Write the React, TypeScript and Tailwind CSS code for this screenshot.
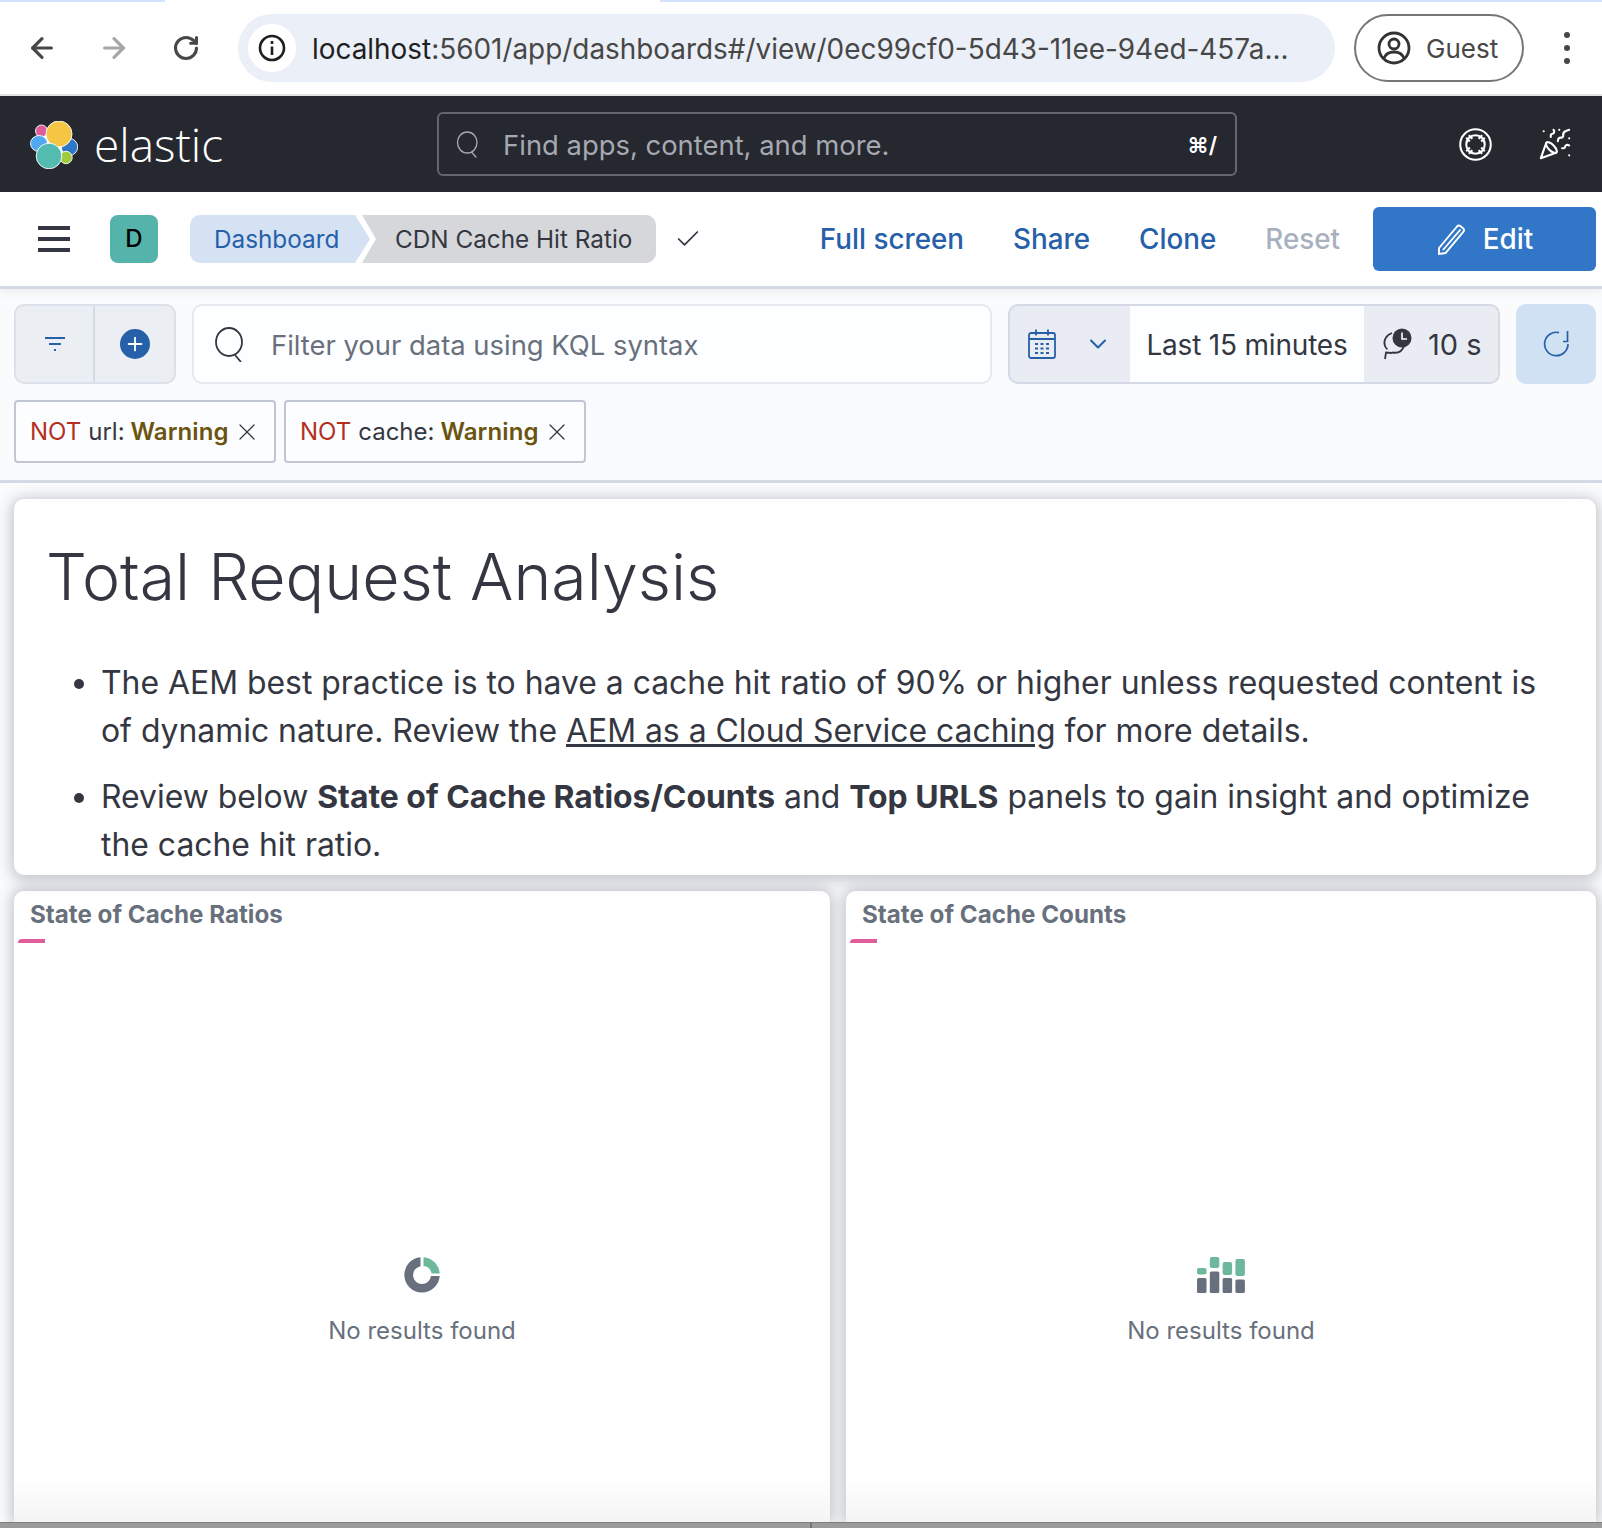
import React from 'react';
import { ArrowLeft, ArrowRight, RotateCw, ChevronDown, X, Check, PartyPopper, Plus } from 'lucide-react';

function SearchGlyph({ className }: { className?: string }) {
  return (
    <svg viewBox="0 0 32 36" fill="none" stroke="currentColor" strokeWidth="1.8" className={className}>
      <ellipse cx="15" cy="16" rx="13" ry="14" />
      <path d="M21 29l6 7" />
    </svg>
  );
}

function ElasticLogo() {
  return (
    <svg viewBox="30 20 48 48" className="h-[48px] w-[48px]" stroke="#fff" strokeWidth="0.9">
      <circle cx="54" cy="44" r="14" fill="#fff" />
      <circle cx="41.5" cy="30" r="6" fill="#E05C9C" />
      <ellipse cx="39" cy="42.5" rx="8.5" ry="8" fill="#4FA8F0" />
      <ellipse cx="69.5" cy="46" rx="8.2" ry="8.5" fill="#2E78C7" />
      <circle cx="66" cy="56.5" r="6.2" fill="#A0CB3C" />
      <circle cx="59" cy="33" r="13" fill="#F4C644" />
      <circle cx="49" cy="55" r="12.8" fill="#54BBB1" />
    </svg>
  );
}

function HelpGlyph() {
  return (
    <svg viewBox="0 0 32 32" className="h-[33px] w-[33px] text-white" fill="none" stroke="currentColor" strokeWidth="2">
      <circle cx="16" cy="16" r="14.8" />
      <circle cx="16" cy="16" r="9" />
      <path d="M7 9.500l3.500 3.500M9.500 7l3.500 3.500M25 9.500l-3.500 3.500M22.500 7l-3.500 3.500M7 22.500l3.500-3.500M9.500 25l3.500-3.500M25 22.500l-3.500-3.500M22.500 25l-3.500-3.500" />
    </svg>
  );
}

function CalendarGlyph() {
  return (
    <svg viewBox="0 0 28 30" className="h-[30px] w-[28px] text-[#2560A8]" fill="none" stroke="currentColor" strokeWidth="1.8">
      <rect x="1" y="4" width="26" height="25" rx="2" />
      <path d="M1 10h26M8 0.5v6M20 0.5v6" />
      <path d="M7 15h3M12.5 15h3M18 15h3M7 19.5h3M12.5 19.5h3M18 19.5h3M7 24h3M12.5 24h3M18 24h3" strokeWidth="2.2" />
    </svg>
  );
}

function AutoRefreshGlyph() {
  return (
    <svg viewBox="0 0 30 32" className="h-[32px] w-[30px] text-[#343741]" fill="none" stroke="currentColor" strokeWidth="1.8">
      <path d="M10 5C4 7 1 13 3 18c.6 1.6 1.5 2.6 2.5 3.4M22 18c-1.5 5-6 7.5-12 6.5" />
      <path d="M3 31l1-6.5 6 .5" />
      <circle cx="20" cy="10" r="9.500" fill="currentColor" stroke="none" />
      <path d="M20 4.500V11h5" stroke="#fff" strokeWidth="1.6" />
    </svg>
  );
}

function DonutGlyph() {
  return (
    <svg viewBox="0 0 36 36" className="h-[36px] w-[36px]">
      <path d="M16.5 0.2A17.7 17.7 0 1 0 35.7 19H27A9 9 0 1 1 16.5 9.2Z" fill="#69707D" />
      <path d="M19.5 0.2A17.7 17.7 0 0 1 35.7 16.4H27.5A9 9 0 0 0 19.5 9Z" fill="#6DB79C" />
    </svg>
  );
}

function BarsGlyph() {
  return (
    <svg viewBox="0 0 48 36" className="h-[36px] w-[48px]">
      <rect x="0" y="11" width="9.5" height="6.5" rx="2" fill="#6DB79C" />
      <rect x="0" y="21" width="9.5" height="15" rx="1.5" fill="#69707D" />
      <rect x="12.8" y="0" width="9.5" height="11" rx="2" fill="#6DB79C" />
      <rect x="12.8" y="14.5" width="9.5" height="21.5" rx="1.5" fill="#69707D" />
      <rect x="25.6" y="5" width="9.5" height="13" rx="2" fill="#6DB79C" />
      <rect x="25.6" y="21" width="9.5" height="15" rx="1.5" fill="#69707D" />
      <rect x="38.4" y="2" width="9.5" height="17" rx="2" fill="#6DB79C" />
      <rect x="38.4" y="22.5" width="9.5" height="13.5" rx="1.5" fill="#69707D" />
    </svg>
  );
}

function FilterPill({ field, width }: { field: string; width: string }) {
  return (
    <div className={`flex h-[63px] items-center rounded-[4px] border-2 border-[#C0C6D2] bg-[#FCFDFE] pl-[14px] text-[24px] text-[#343741] ${width}`}>
      <span className="text-[#B3301F]">NOT</span>
      <span className="ml-[7px]">{field}:</span>
      <span className="ml-[6px] font-semibold tracking-[0.1px] text-[#6B5410]">Warning</span>
      <X className="ml-[4px] h-[28px] w-[28px]" strokeWidth={1.1} />
    </div>
  );
}

function ChartPanel({ title, width, children }: { title: string; width: string; children: React.ReactNode }) {
  return (
    <div className={`flex h-full flex-col rounded-t-[10px] bg-gradient-to-b from-white from-[93%] to-[#F4F4F4] shadow-[0_0_14px_3px_rgba(70,75,90,0.3)] ${width}`}>
      <div className="pl-[16px] pt-[8px] text-[24.2px] font-bold leading-[32px] text-[#69707D]">{title}</div>
      <div className="ml-[4px] mt-[8px] h-[4px] w-[27px] rounded-tl-[6px] bg-[#E05C9C]" />
      <div className="flex flex-1 flex-col items-center pt-[314px]">
        {children}
        <div className="mt-[22px] text-[24px] leading-[32px] text-[#69707D]">No results found</div>
      </div>
    </div>
  );
}

export default function App() {
  return (
    <div className="flex h-[1528px] w-full flex-col overflow-hidden bg-[#FAFBFD] font-['Inter',sans-serif] text-[#343741]">
      {/* browser chrome */}
      <div className="flex h-[2px] bg-white">
        <div className="w-[165px] bg-[#D3E3FD]" />
        <div className="flex-1" />
        <div className="w-[942px] bg-[#D3E3FD]" />
      </div>
      <div className="flex h-[94px] items-center border-b-2 border-[#E4E4E6] bg-white">
        <ArrowLeft className="ml-[26px] h-[32px] w-[32px] text-[#474747]" strokeWidth={2.4} />
        <ArrowRight className="ml-[40px] h-[32px] w-[32px] text-[#A6A6A6]" strokeWidth={2.4} />
        <RotateCw className="ml-[42px] h-[28px] w-[28px] text-[#474747]" strokeWidth={2.6} />
        <div className="ml-[38px] flex h-[68px] w-[1097px] items-center rounded-full bg-[#EBEFF7] pl-[10px]">
          <div className="flex h-[48px] w-[48px] items-center justify-center rounded-full bg-white">
            <svg viewBox="0 0 28 28" className="h-[28px] w-[28px]" fill="none" stroke="#1f1f1f" strokeWidth="2.6">
              <circle cx="14" cy="14" r="12" />
              <path d="M14 12.5V21M14 7v3" />
            </svg>
          </div>
          <span className="ml-[16px] pt-[3px] text-[27.9px] text-[#1F1F1F]">
            localhost<span className="text-[#474747]">:5601/app/dashboards#/view/0ec99cf0-5d43-11ee-94ed-457a...</span>
          </span>
        </div>
        <div className="ml-[19px] flex h-[68px] w-[170px] items-center rounded-full border-2 border-[#747775] pl-[21px]">
          <svg viewBox="0 0 34 34" className="h-[34px] w-[34px]" fill="none" stroke="#333" strokeWidth="2.8">
            <circle cx="17" cy="17" r="15" />
            <circle cx="17" cy="13" r="5" />
            <path d="M7 27c2-5 6-6 10-6s8 1 10 6" />
          </svg>
          <span className="ml-[15px] text-[26px] text-[#474747]">Guest</span>
        </div>
        <div className="ml-[40px] flex flex-col gap-[7px]">
          <div className="h-[6px] w-[6px] rounded-full bg-[#474747]" />
          <div className="h-[6px] w-[6px] rounded-full bg-[#474747]" />
          <div className="h-[6px] w-[6px] rounded-full bg-[#474747]" />
        </div>
      </div>

      {/* kibana header */}
      <div className="flex h-[96px] items-center bg-[#25282F]">
        <div className="ml-[30px] mt-[2px]">
          <ElasticLogo />
        </div>
        <span className="ml-[16px] font-['Open_Sans',sans-serif] text-[46px] font-light leading-none text-white">elastic</span>
        <div className="ml-[214px] flex h-[64px] w-[800px] items-center rounded-[6px] border-2 border-[#646770] pl-[17px] text-[#A5A9B2]">
          <SearchGlyph className="h-[28px] w-[24px]" />
          <span className="ml-[23px] pt-[4px] text-[27.4px]">Find apps, content, and more.</span>
          <span className="ml-auto mr-[18px] pt-[2px] text-[22px] font-semibold text-white">⌘/</span>
        </div>
        <div className="ml-[222px]">
          <HelpGlyph />
        </div>
        <PartyPopper className="ml-[46px] h-[34px] w-[34px] text-white" strokeWidth={1.5} />
      </div>

      {/* breadcrumbs */}
      <div className="z-10 flex h-[97px] items-center border-b-[3px] border-[#D3DAE6] bg-white pr-[6px] shadow-[0_3px_8px_rgba(70,75,90,0.08)]">
        <div className="ml-[38px] flex w-[32px] flex-col gap-[7px]">
          <div className="h-[4px] bg-[#343741]" />
          <div className="h-[4px] bg-[#343741]" />
          <div className="h-[4px] bg-[#343741]" />
        </div>
        <div className="ml-[40px] flex h-[48px] w-[48px] items-center justify-center rounded-[8px] bg-[#54B3AA] text-[24px] font-medium text-black">D</div>
        <div className="ml-[32px] flex h-[48px] w-[180px] items-center rounded-l-[10px] bg-[#D5E2F4] pl-[24px] text-[24.3px] text-[#2560A8] [clip-path:polygon(0_0,165px_0,100%_50%,165px_100%,0_100%)]">
          Dashboard
        </div>
        <div className="-ml-[8px] flex h-[48px] w-[294px] items-center rounded-r-[10px] bg-[#D6D7DA] pl-[33px] text-[24.3px] text-[#343741] [clip-path:polygon(0_0,100%_0,100%_100%,0_100%,14px_50%)]">
          CDN Cache Hit Ratio
        </div>
        <Check className="ml-[18px] h-[28px] w-[28px] text-[#343741]" strokeWidth={1.5} />
        <div className="ml-auto flex items-center gap-[49px] whitespace-nowrap pt-[2px] text-[27.8px] font-medium text-[#2560A8]">
          <span>Full screen</span>
          <span>Share</span>
          <span>Clone</span>
          <span className="text-[#A9B1BF]">Reset</span>
        </div>
        <div className="ml-[33px] flex h-[64px] w-[223px] items-center justify-center gap-[17px] rounded-[6px] bg-[#3276C8] text-[27.8px] font-medium text-white">
          <svg viewBox="0 0 30 32" className="h-[32px] w-[30px]" fill="none" stroke="currentColor" strokeWidth="1.9">
            <path d="M3 25L21 3.5a2.6 2.6 0 0 1 3.6-.3l2.4 2a2.6 2.6 0 0 1 .3 3.6L9.5 30 3 31Z" />
            <path d="M7 27L24.5 6.5" />
          </svg>
          <span className="pt-[2px]">Edit</span>
        </div>
      </div>

      {/* query bar */}
      <div className="flex pl-[14px] pr-[6px] pt-[15px]">
        <div className="flex h-[80px] w-[162px] rounded-[10px] border-2 border-[#DCE0EA] bg-[#EBEEF3]">
          <div className="flex w-[79px] items-center justify-center border-r-2 border-[#D3DAE6]">
            <svg viewBox="0 0 20 16" className="h-[16px] w-[20px]" stroke="#2560A8" strokeWidth="2">
              <path d="M0 2h20M4 8h12M9 14h2" />
            </svg>
          </div>
          <div className="flex flex-1 items-center justify-center">
            <div className="flex h-[30px] w-[30px] items-center justify-center rounded-full bg-[#2560A8]">
              <Plus className="h-[22px] w-[22px] text-white" strokeWidth={2} />
            </div>
          </div>
        </div>
        <div className="ml-[16px] flex h-[80px] w-[800px] items-center rounded-[10px] border-2 border-[#E6E9F1] bg-[#FDFEFF] pl-[20px]">
          <SearchGlyph className="h-[36px] w-[32px] text-[#343741]" />
          <span className="ml-[25px] pt-[4px] text-[27.4px] text-[#69707D]">Filter your data using KQL syntax</span>
        </div>
        <div className="ml-[16px] flex h-[80px] w-[492px] overflow-hidden rounded-[10px] border-2 border-[#D3DAE6] bg-[#E9EDF3]">
          <div className="flex w-[120px] items-center pl-[18px]">
            <CalendarGlyph />
            <ChevronDown className="ml-[28px] h-[28px] w-[28px] text-[#2560A8]" strokeWidth={1.8} />
          </div>
          <div className="flex w-[234px] items-center justify-center bg-[#FDFEFF] pt-[2px] text-[28px] tracking-[-0.2px]">Last 15 minutes</div>
          <div className="flex flex-1 items-center pl-[18px] text-[29px]">
            <AutoRefreshGlyph />
            <span className="ml-[16px] pt-[2px]">10 s</span>
          </div>
        </div>
        <div className="ml-[16px] flex h-[80px] w-[80px] items-center justify-center rounded-[10px] bg-[#CFE1F2]">
          <svg viewBox="0 0 26 26" className="h-[26px] w-[26px]" fill="none" stroke="#2560A8" strokeWidth="1.7">
            <path d="M25 13A11.7 11.7 0 1 1 16 1.6" />
            <path d="M24.5 0v10.5H20" />
          </svg>
        </div>
      </div>

      {/* filter pills */}
      <div className="flex gap-[8px] border-b-[3px] border-[#D3DAE6] pb-[17px] pl-[14px] pt-[16px]">
        <FilterPill field="url" width="w-[262px]" />
        <FilterPill field="cache" width="w-[302px]" />
      </div>

      {/* markdown panel */}
      <div className="z-10 ml-[14px] mr-[6px] mt-[16px] h-[376px] overflow-hidden rounded-[10px] bg-white pl-[32px] pr-[34px] pt-[36px] shadow-[0_2px_14px_3px_rgba(70,75,90,0.3)]">
        <h1 className="text-[64.4px] font-light leading-[84px] text-[#343741]">Total Request Analysis</h1>
        <ul className="ml-[55px] mt-[40px] list-disc text-[31.9px] leading-[48px] text-[#343741]">
          <li>
            The AEM best practice is to have a cache hit ratio of 90% or higher unless requested content is of dynamic nature. Review the{' '}
            <span className="underline">AEM as a Cloud Service caching</span> for more details.
          </li>
          <li className="mt-[18px]">
            Review below <b className="font-bold">State of Cache Ratios/Counts</b> and <b className="font-bold">Top URLS</b> panels to gain insight and optimize the cache hit ratio.
          </li>
        </ul>
      </div>

      {/* chart panels */}
      <div className="ml-[14px] mr-[6px] mt-[16px] flex min-h-0 flex-1 gap-[16px]">
        <ChartPanel title="State of Cache Ratios" width="w-[816px]">
          <DonutGlyph />
        </ChartPanel>
        <ChartPanel title="State of Cache Counts" width="w-[750px]">
          <BarsGlyph />
        </ChartPanel>
      </div>

      <div className="z-10 flex h-[6px] border-t border-[#7E7E7E] bg-[#9B9B9B]">
        <div className="ml-[810px] w-[2px] bg-[#6C7280]" />
      </div>
    </div>
  );
}
